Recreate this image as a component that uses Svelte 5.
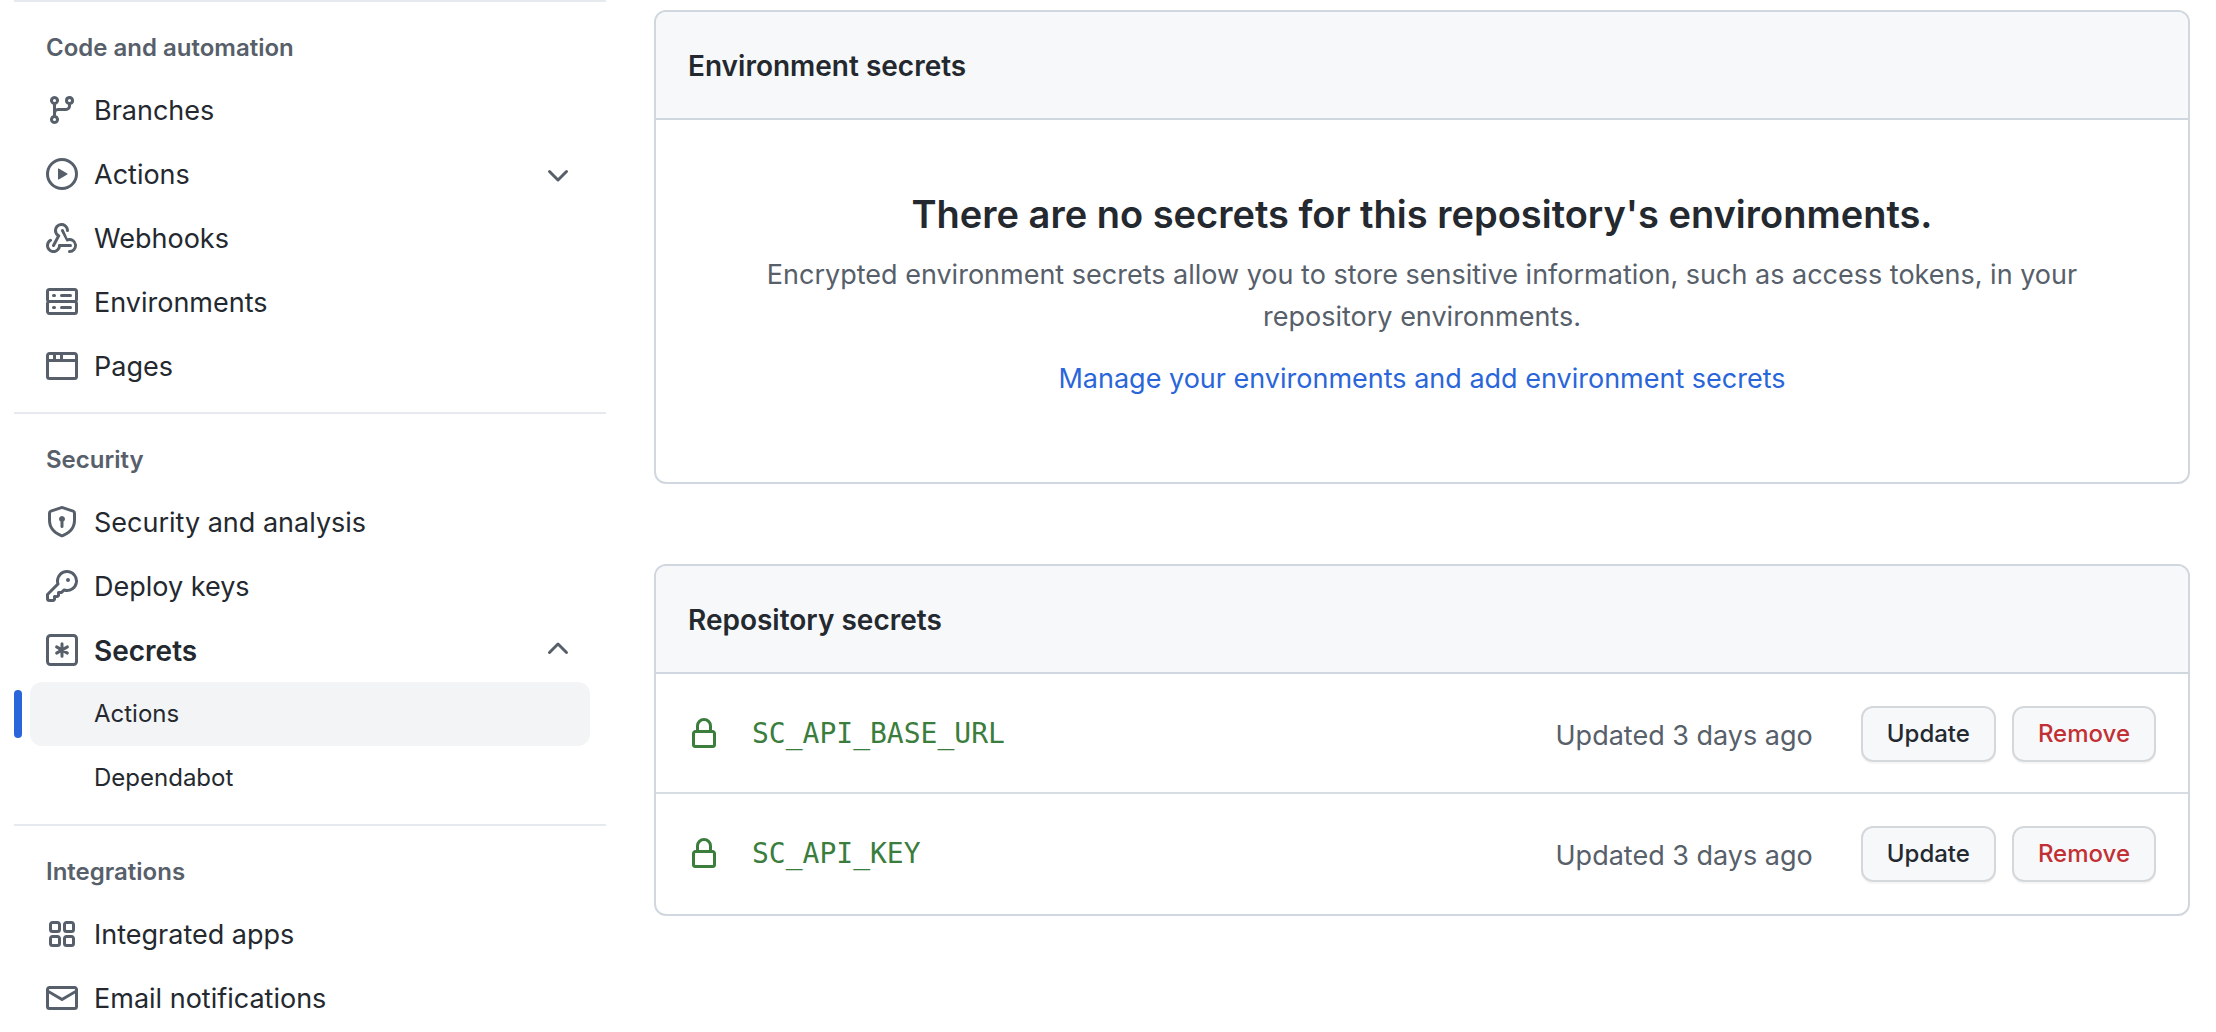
<script lang="ts">
  type Item = {
    label: string;
    icon: string;
    expanded?: boolean;
    children?: { label: string; current?: boolean }[];
  };
  type Group = { title: string; items: Item[] };

  const icons: Record<string, string> = {
    branch:
      'M11.75 2.5a.75.75 0 1 0 0 1.5.75.75 0 0 0 0-1.5Zm-2.25.75a2.25 2.25 0 1 1 3 2.122V6A2.5 2.5 0 0 1 10 8.5H6a1 1 0 0 0-1 1v1.128a2.251 2.251 0 1 1-1.5 0V5.372a2.25 2.25 0 1 1 1.5 0v1.836A2.493 2.493 0 0 1 6 7h4a1 1 0 0 0 1-1v-.628A2.25 2.25 0 0 1 9.5 3.25ZM4.25 12a.75.75 0 1 0 0 1.5.75.75 0 0 0 0-1.5ZM3.5 3.25a.75.75 0 1 1 1.5 0 .75.75 0 0 1-1.5 0Z',
    play: 'M1.5 8a6.5 6.5 0 1 1 13 0 6.5 6.5 0 0 1-13 0ZM8 0a8 8 0 1 0 0 16A8 8 0 0 0 8 0ZM6.379 5.227A.25.25 0 0 0 6 5.442v5.117a.25.25 0 0 0 .379.214l4.264-2.559a.25.25 0 0 0 0-.428L6.379 5.227Z',
    webhook:
      'M5.5 4.25a2.25 2.25 0 0 1 4.5 0 .75.75 0 0 0 1.5 0 3.75 3.75 0 1 0-6.14 2.889l-2.272 4.258a.75.75 0 0 0 1.324.706L7 7.25a.75.75 0 0 0-.309-1.015A2.25 2.25 0 0 1 5.5 4.25Zm2.364-.62a.75.75 0 0 0-.306 1.018l2.495 4.672a.75.75 0 0 0 .97.324 2.25 2.25 0 1 1 .727 4.356.75.75 0 0 0 0 1.5 3.75 3.75 0 1 0-1.022-7.358L8.882 3.936a.75.75 0 0 0-1.018-.306ZM2.9 8.776A.75.75 0 0 1 2.625 9.8 2.25 2.25 0 1 0 6 11.75a.75.75 0 0 1 .75-.751h5.5a.75.75 0 0 1 0 1.5H7.425a3.751 3.751 0 1 1-5.55-3.998.75.75 0 0 1 1.024.274Z',
    server:
      'M1.75 1A1.75 1.75 0 0 0 0 2.75v4c0 .372.116.717.314 1a1.742 1.742 0 0 0-.314 1v4c0 .966.784 1.75 1.75 1.75h12.5A1.75 1.75 0 0 0 16 12.75v-4c0-.372-.116-.717-.314-1 .198-.283.314-.628.314-1v-4A1.75 1.75 0 0 0 14.25 1H1.75Zm0 7.5h12.5a.25.25 0 0 1 .25.25v4a.25.25 0 0 1-.25.25H1.75a.25.25 0 0 1-.25-.25v-4a.25.25 0 0 1 .25-.25Zm0-1.5a.25.25 0 0 1-.25-.25v-4a.25.25 0 0 1 .25-.25h12.5a.25.25 0 0 1 .25.25v4a.25.25 0 0 1-.25.25H1.75ZM7 4.75A.75.75 0 0 1 7.75 4h4.5a.75.75 0 0 1 0 1.5h-4.5A.75.75 0 0 1 7 4.75ZM7.75 10a.75.75 0 0 0 0 1.5h4.5a.75.75 0 0 0 0-1.5h-4.5ZM3 4.75A.75.75 0 0 1 3.75 4h.5a.75.75 0 0 1 0 1.5h-.5A.75.75 0 0 1 3 4.75ZM3.75 10a.75.75 0 0 0 0 1.5h.5a.75.75 0 0 0 0-1.5h-.5Z',
    browser:
      'M0 2.75C0 1.784.784 1 1.75 1h12.5c.966 0 1.75.784 1.75 1.75v10.5A1.75 1.75 0 0 1 14.25 15H1.75A1.75 1.75 0 0 1 0 13.25ZM14.5 6h-13v7.25c0 .138.112.25.25.25h12.5a.25.25 0 0 0 .25-.25Zm-6-3.5v2h6V2.75a.25.25 0 0 0-.25-.25ZM5 2.5v2h2v-2Zm-3.25 0a.25.25 0 0 0-.25.25V4.5h2v-2Z',
    shield:
      'M7.467.133a1.75 1.75 0 0 1 1.066 0l5.25 1.68A1.75 1.75 0 0 1 15 3.48V7c0 1.566-.32 3.182-1.303 4.682-.983 1.498-2.585 2.813-5.032 3.855a1.7 1.7 0 0 1-1.33 0c-2.447-1.042-4.049-2.357-5.032-3.855C1.32 10.182 1 8.566 1 7V3.48a1.75 1.75 0 0 1 1.217-1.667Zm.61 1.429a.25.25 0 0 0-.153 0l-5.25 1.68a.25.25 0 0 0-.174.238V7c0 1.358.275 2.666 1.057 3.86.784 1.194 2.121 2.34 4.366 3.297a.2.2 0 0 0 .154 0c2.245-.956 3.582-2.104 4.366-3.298C13.225 9.666 13.5 8.36 13.5 7V3.48a.25.25 0 0 0-.174-.237ZM9.5 6.5c0 .536-.286 1.032-.75 1.3v2.45a.75.75 0 0 1-1.5 0V7.8A1.5 1.5 0 1 1 9.5 6.5Z',
    key: 'M10.5 0a5.499 5.499 0 1 1-1.288 10.848l-.932.932a.749.749 0 0 1-.53.22H7v.75a.749.749 0 0 1-.22.53l-.5.5a.749.749 0 0 1-.53.22H5v.75a.749.749 0 0 1-.22.53l-.5.5a.749.749 0 0 1-.53.22h-2A1.75 1.75 0 0 1 0 14.25v-2c0-.199.079-.389.22-.53l4.932-4.932A5.5 5.5 0 0 1 10.5 0Zm-4 5.5c-.001.431.069.86.205 1.269a.75.75 0 0 1-.181.768L1.5 12.56v1.69c0 .138.112.25.25.25h1.69l.06-.06v-1.19a.75.75 0 0 1 .75-.75h1.19l.06-.06v-1.19a.75.75 0 0 1 .75-.75h1.19l1.023-1.025a.75.75 0 0 1 .768-.18A4 4 0 1 0 6.5 5.5ZM11 6a1 1 0 1 1 0-2 1 1 0 0 1 0 2Z',
    apps: 'M1.5 3.25c0-.966.784-1.75 1.75-1.75h2.5c.966 0 1.75.784 1.75 1.75v2.5A1.75 1.75 0 0 1 5.75 7.5h-2.5A1.75 1.75 0 0 1 1.5 5.75Zm7 0c0-.966.784-1.75 1.75-1.75h2.5c.966 0 1.75.784 1.75 1.75v2.5a1.75 1.75 0 0 1-1.75 1.75h-2.5A1.75 1.75 0 0 1 8.5 5.75Zm-7 7c0-.966.784-1.75 1.75-1.75h2.5c.966 0 1.75.784 1.75 1.75v2.5a1.75 1.75 0 0 1-1.75 1.75h-2.5a1.75 1.75 0 0 1-1.75-1.75Zm7 0c0-.966.784-1.75 1.75-1.75h2.5c.966 0 1.75.784 1.75 1.75v2.5a1.75 1.75 0 0 1-1.75 1.75h-2.5a1.75 1.75 0 0 1-1.75-1.75ZM3.25 3a.25.25 0 0 0-.25.25v2.5c0 .138.112.25.25.25h2.5A.25.25 0 0 0 6 5.75v-2.5A.25.25 0 0 0 5.75 3Zm7 0a.25.25 0 0 0-.25.25v2.5c0 .138.112.25.25.25h2.5a.25.25 0 0 0 .25-.25v-2.5a.25.25 0 0 0-.25-.25Zm-7 7a.25.25 0 0 0-.25.25v2.5c0 .138.112.25.25.25h2.5a.25.25 0 0 0 .25-.25v-2.5a.25.25 0 0 0-.25-.25Zm7 0a.25.25 0 0 0-.25.25v2.5c0 .138.112.25.25.25h2.5a.25.25 0 0 0 .25-.25v-2.5a.25.25 0 0 0-.25-.25Z',
    mail: 'M1.75 2h12.5c.966 0 1.75.784 1.75 1.75v8.5A1.75 1.75 0 0 1 14.25 14H1.75A1.75 1.75 0 0 1 0 12.25v-8.5C0 2.784.784 2 1.75 2ZM1.5 5.809v6.442c0 .138.112.25.25.25h12.5a.25.25 0 0 0 .25-.25V5.809L8.38 9.397a.75.75 0 0 1-.76 0L1.5 5.809Zm13-1.74v-.319a.25.25 0 0 0-.25-.25H1.75a.25.25 0 0 0-.25.25v.319l6.5 3.81 6.5-3.81Z',
    lock: 'M4 4a4 4 0 0 1 8 0v2h.25c.966 0 1.75.784 1.75 1.75v5.5A1.75 1.75 0 0 1 12.25 15h-8.5A1.75 1.75 0 0 1 2 13.25v-5.5C2 6.784 2.784 6 3.75 6H4Zm8.25 3.5h-8.5a.25.25 0 0 0-.25.25v5.5c0 .138.112.25.25.25h8.5a.25.25 0 0 0 .25-.25v-5.5a.25.25 0 0 0-.25-.25ZM10.5 6V4a2.5 2.5 0 1 0-5 0v2Z',
    chevron:
      'M12.78 6.22a.75.75 0 0 1 0 1.06l-4.25 4.25a.75.75 0 0 1-1.06 0L3.22 7.28a.75.75 0 0 1 1.06-1.06L8 9.94l3.72-3.72a.75.75 0 0 1 1.06 0Z'
  };

  const groups: Group[] = [
    {
      title: 'Code and automation',
      items: [
        { label: 'Branches', icon: 'branch' },
        { label: 'Actions', icon: 'play', expanded: false },
        { label: 'Webhooks', icon: 'webhook' },
        { label: 'Environments', icon: 'server' },
        { label: 'Pages', icon: 'browser' }
      ]
    },
    {
      title: 'Security',
      items: [
        { label: 'Security and analysis', icon: 'shield' },
        { label: 'Deploy keys', icon: 'key' },
        {
          label: 'Secrets',
          icon: 'asterisk',
          expanded: true,
          children: [{ label: 'Actions', current: true }, { label: 'Dependabot' }]
        }
      ]
    },
    {
      title: 'Integrations',
      items: [
        { label: 'Integrated apps', icon: 'apps' },
        { label: 'Email notifications', icon: 'mail' }
      ]
    }
  ];

  const secrets = [
    { name: 'SC_API_BASE_URL', updated: 'Updated 3 days ago' },
    { name: 'SC_API_KEY', updated: 'Updated 3 days ago' }
  ];
</script>

{#snippet icon(name: string)}
  <svg class="icon" viewBox="0 0 16 16" aria-hidden="true">
    {#if name === 'asterisk'}
      <rect x="0.75" y="0.75" width="14.5" height="14.5" rx="1.5" fill="none" stroke="currentColor" stroke-width="1.5" />
      <path d="M8 4.9v6.2M5.3 6.45l5.4 3.1M10.7 6.45l-5.4 3.1" fill="none" stroke="currentColor" stroke-width="1.5" stroke-linecap="round" />
    {:else}
      <path d={icons[name]} fill-rule="evenodd" />
    {/if}
  </svg>
{/snippet}

<div class="page">
  <nav class="sidebar" aria-label="Repository settings">
    {#each groups as group (group.title)}
      <section class="group">
        <h3>{group.title}</h3>
        <ul>
          {#each group.items as item (item.label)}
            <li>
              {#if item.expanded === undefined}
                <a class="item" href="#top">
                  {@render icon(item.icon)}
                  <span class="label">{item.label}</span>
                </a>
              {:else}
                <button class="item" class:open={item.expanded} type="button" aria-expanded={item.expanded}>
                  {@render icon(item.icon)}
                  <span class="label">{item.label}</span>
                  <span class="chevron">{@render icon('chevron')}</span>
                </button>
              {/if}
              {#if item.children}
                <ul>
                  {#each item.children as child (child.label)}
                    <li>
                      <a class="item sub" class:current={child.current} href="#top">{child.label}</a>
                    </li>
                  {/each}
                </ul>
              {/if}
            </li>
          {/each}
        </ul>
      </section>
    {/each}
  </nav>

  <main>
    <section class="box">
      <h2>Environment secrets</h2>
      <div class="blank">
        <h3>There are no secrets for this repository's environments.</h3>
        <p>
          Encrypted environment secrets allow you to store sensitive information, such as access tokens, in your
          repository environments.
        </p>
        <a href="#top">Manage your environments and add environment secrets</a>
      </div>
    </section>

    <section class="box">
      <h2>Repository secrets</h2>
      <ul>
        {#each secrets as secret (secret.name)}
          <li class="secret">
            {@render icon('lock')}
            <code>{secret.name}</code>
            <span class="updated">{secret.updated}</span>
            <div class="actions">
              <button class="btn" type="button">Update</button>
              <button class="btn danger" type="button">Remove</button>
            </div>
          </li>
        {/each}
      </ul>
    </section>
  </main>
</div>

<style>
  :global(body) {
    margin: 0;
    background: #fff;
  }
  .page {
    --fg: #24292f;
    --muted: #57606a;
    --border: #d0d7de;
    --accent: #2a66d9;
    display: grid;
    grid-template-columns: 592px minmax(0, 1fr);
    gap: 48px;
    padding: 0 26px 0 14px;
    color: var(--fg);
    font-family: Inter, 'Liberation Sans', sans-serif;
    font-size: 27px;
    line-height: 42px;
  }
  h2,
  h3,
  p,
  ul {
    margin: 0;
    padding: 0;
  }
  ul {
    list-style: none;
  }
  .icon {
    flex: none;
    width: 32px;
    height: 32px;
    fill: currentColor;
  }

  .group {
    padding-bottom: 14px;
    border-top: 2px solid #e6eaee;
  }
  .group h3 {
    padding: 28px 32px 12px;
    color: var(--muted);
    font-size: 24px;
    font-weight: 600;
    line-height: 36px;
  }
  .item {
    position: relative;
    display: flex;
    align-items: center;
    gap: 16px;
    box-sizing: border-box;
    width: calc(100% - 32px);
    height: 64px;
    margin: 0 16px;
    padding: 0 16px;
    border: 0;
    border-radius: 12px;
    background: none;
    color: var(--fg);
    font: inherit;
    text-align: left;
    text-decoration: none;
  }
  .item .icon {
    color: var(--muted);
  }
  .item.open {
    font-size: 28px;
    font-weight: 600;
  }
  .label {
    padding-top: 2px;
  }
  .chevron {
    display: flex;
    margin-left: auto;
  }
  .open .chevron .icon {
    transform: rotate(180deg);
  }
  .item.sub {
    padding-left: 64px;
    font-size: 24px;
  }
  .item.current {
    background: #f3f4f6;
  }
  .item.current::before {
    position: absolute;
    top: 8px;
    left: -16px;
    width: 8px;
    height: 48px;
    border-radius: 12px;
    background: var(--accent);
    content: '';
  }

  main {
    padding-top: 10px;
  }
  .box {
    margin-bottom: 80px;
    border: 2px solid var(--border);
    border-radius: 12px;
    overflow: hidden;
  }
  .box h2 {
    padding: 33px 32px 31px;
    border-bottom: 2px solid var(--border);
    background: #f6f8fa;
    font-size: 28px;
    font-weight: 600;
    line-height: 42px;
  }
  .blank {
    padding: 64px 80px 82px;
    text-align: center;
  }
  .blank h3 {
    margin-bottom: 10px;
    font-size: 38px;
    font-weight: 600;
    line-height: 60px;
  }
  .blank p {
    margin-bottom: 20px;
    color: var(--muted);
  }
  .blank a {
    color: var(--accent);
    text-decoration: none;
  }

  .secret {
    display: flex;
    align-items: center;
    padding: 32px 32px 30px;
    color: var(--muted);
  }
  .secret:last-child {
    padding-bottom: 32px;
  }
  .secret + .secret {
    border-top: 2px solid #d8dee4;
  }
  .secret .icon,
  code {
    color: #3a7d3c;
  }
  code {
    margin-left: 32px;
    font-family: 'DejaVu Sans Mono', monospace;
    font-size: 28px;
  }
  .updated {
    margin-left: auto;
    padding-top: 4px;
  }
  .actions {
    display: flex;
    gap: 16px;
    margin-left: 48px;
  }
  .btn {
    padding: 6px 24px;
    border: 2px solid #d5d8da;
    border-radius: 12px;
    background: #f6f8fa;
    box-shadow: 0 2px 0 rgba(27, 31, 36, 0.04);
    color: var(--fg);
    font: inherit;
    font-size: 24px;
    font-weight: 500;
    line-height: 40px;
  }
  .danger {
    color: #c23034;
  }
</style>
